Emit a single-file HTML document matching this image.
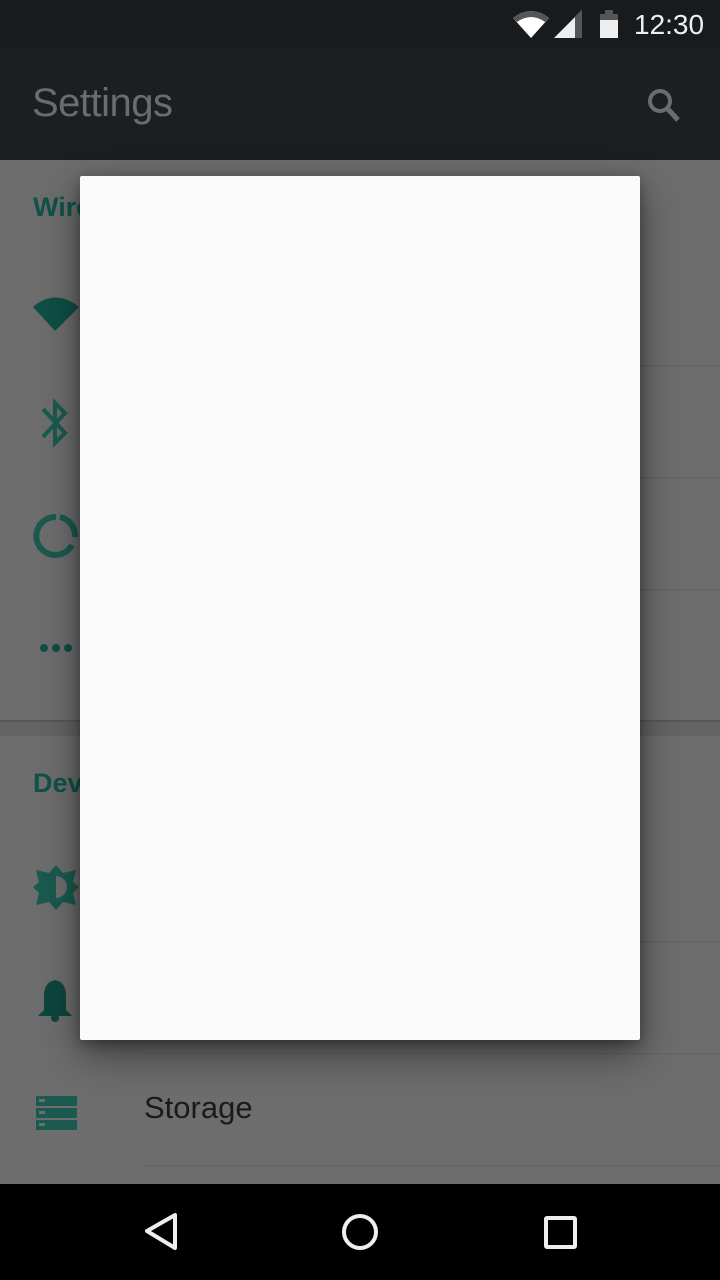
<!DOCTYPE html>
<html><head><style>
*{margin:0;padding:0;box-sizing:border-box}
body{width:720px;height:1280px;overflow:hidden;background:#646464;font-family:"Liberation Sans",sans-serif;position:relative}
.abs{position:absolute}
.sb{top:0;left:0;width:720px;height:48px;background:#181b1d}
.tb{top:48px;left:0;width:720px;height:112px;background:#1c1f21}
.card{left:0;width:720px;background:#6d6d6d}
.div{position:absolute;left:144px;right:0;height:1px;background:#626262}
.hdr{position:absolute;left:33px;color:#0f5248;font-size:27px;font-weight:bold}
.nav{top:1184px;left:0;width:720px;height:96px;background:#000}
</style></head><body>
<div class="abs sb"></div>
<svg class="abs" style="left:0;top:0" width="720" height="48">
<path d="M513 18 Q531 4 549 18 L531 38 Z" fill="#fff"/>
<path d="M513 18 Q531 4 549 18 L545 22 Q531 12 517 22Z" fill="#555"/>
<path d="M554 38 L582 38 L582 10 Z" fill="#eee"/>
<path d="M575 17 L582 10 L582 38 L575 38Z" fill="#555"/>
<rect x="600" y="14" width="18" height="24" fill="#eee"/>
<rect x="600" y="14" width="18" height="6" fill="#555"/>
<rect x="605" y="10" width="8" height="4" fill="#555"/>
<text x="634" y="34" fill="#eee" font-size="28" font-family="Liberation Sans">12:30</text>
</svg>
<div class="abs tb"></div>
<div class="abs" style="left:32px;top:81px;font-size:40px;color:#6c6c6c;letter-spacing:-0.5px">Settings</div>
<svg class="abs" style="left:640px;top:82px" width="50" height="44"><circle cx="20" cy="19" r="10" fill="none" stroke="#6c6c6c" stroke-width="4"/><path d="M27 26 L38 38" stroke="#6c6c6c" stroke-width="5"/></svg>
<div class="abs card" style="top:160px;height:560px">
<div class="hdr" style="top:32px">Wireless</div>
<div class="div" style="top:205px"></div><div class="div" style="top:317px"></div><div class="div" style="top:429px"></div>
</div>
<div class="abs" style="left:0;top:720px;width:720px;height:2px;background:#585858"></div>
<div class="abs card" style="top:736px;height:448px">
<div class="hdr" style="top:32px">Device</div>
<div class="div" style="top:205px"></div><div class="div" style="top:317px"></div><div class="div" style="top:429px"></div>
<div style="position:absolute;left:144px;top:354px;font-size:31px;color:#1a1a1a">Storage</div>
</div>
<svg class="abs" style="left:0;top:0" width="140" height="1180">
<path d="M33 307 Q55 288 79 307 L55 331Z" fill="#0f4f45"/>
<path d="M43 409 L65 433 L55 443 L55 403 L65 413 L43 437" fill="none" stroke="#1a5a50" stroke-width="4"/>
<path d="M56 517 A19 19 0 1 0 72 545" fill="none" stroke="#1a5a50" stroke-width="6"/>
<path d="M60 517 A19 19 0 0 1 75 537" fill="none" stroke="#1a5a50" stroke-width="6"/>
<circle cx="44" cy="648" r="4" fill="#0f4f45"/><circle cx="56" cy="648" r="4" fill="#0f4f45"/><circle cx="68" cy="648" r="4" fill="#0f4f45"/>
<path d="M56 865 L63 873 L76 870 L73 882 L79 887 L73 893 L76 905 L63 902 L56 910 L49 902 L36 905 L39 893 L33 887 L39 882 L36 870 L49 873Z" fill="#1a5a50"/>
<path d="M56 876 A11 11 0 0 1 56 898Z" fill="#6e6e6e"/>
<path d="M55 980 Q44 982 44 996 L44 1010 L38 1016 L72 1016 L66 1010 L66 996 Q66 982 55 980Z" fill="#0d463d"/>
<circle cx="55" cy="1018" r="4" fill="#0d463d"/>
<rect x="36" y="1096" width="41" height="10" fill="#1a5a50"/><rect x="36" y="1108" width="41" height="10" fill="#1a5a50"/><rect x="36" y="1120" width="41" height="10" fill="#1a5a50"/>
<rect x="39" y="1099" width="6" height="3" fill="#6e6e6e"/><rect x="39" y="1111" width="6" height="3" fill="#6e6e6e"/><rect x="39" y="1123" width="6" height="3" fill="#6e6e6e"/>
</svg>
<div class="abs" style="left:80px;top:176px;width:560px;height:864px;background:#fafafa;border-radius:2px;box-shadow:0 14px 40px rgba(0,0,0,.45),0 4px 12px rgba(0,0,0,.3)"></div>
<div class="abs nav"></div>
<svg class="abs" style="left:0;top:1184px" width="720" height="96">
<path d="M175 31 L147 47 L175 64Z" fill="none" stroke="#eee" stroke-width="4" stroke-linejoin="round"/>
<circle cx="360" cy="48" r="16" fill="none" stroke="#eee" stroke-width="4"/>
<rect x="546" y="34" width="29" height="29" rx="1" fill="none" stroke="#eee" stroke-width="4"/>
</svg>
</body></html>
